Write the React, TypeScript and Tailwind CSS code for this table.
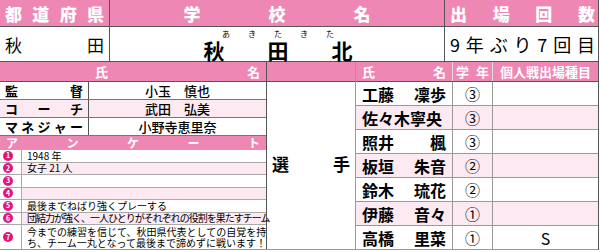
const font = "font-['Noto_Sans_CJK_JP','Noto_Sans',sans-serif]";

const staff = [
    { role: ["監", "督"], name: "小玉　慎也" },
    { role: ["コ", "ー", "チ"], name: "武田　弘美" },
    { role: ["マ", "ネ", "ジ", "ャ", "ー"], name: "小野寺恵里奈" },
];

const survey = [
    "1948 年",
    "女子 21 人",
    "",
    "",
    "最後までねばり強くプレーする",
    "団結力が強く、一人ひとりがそれぞれの役割を果たすチーム",
];

const players = [
    { name: ["工藤", "凜歩"], grade: "③", event: "" },
    { name: ["佐々木寧央"], grade: "③", event: "" },
    { name: ["照井", "楓"], grade: "③", event: "" },
    { name: ["板垣", "朱音"], grade: "②", event: "" },
    { name: ["鈴木", "琉花"], grade: "②", event: "" },
    { name: ["伊藤", "音々"], grade: "①", event: "" },
    { name: ["高橋", "里菜"], grade: "①", event: "S" },
];

function Spread({ chars, className }: { chars: string[]; className?: string }) {
    return (
        <div className={`flex justify-between ${className ?? ""}`}>
            {chars.map((c, i) => (
                <span key={i}>{c}</span>
            ))}
        </div>
    );
}

function Badge({ n }: { n: number }) {
    return (
        <div className="w-[22px] shrink-0 flex items-center pl-[3px] border-r border-[#aaa] bg-white">
            <span className="w-[10px] h-[10px] rounded-full bg-[#e5137e] text-white text-[7px] font-bold leading-none flex items-center justify-center">
                {n}
            </span>
        </div>
    );
}

export default function App() {
    return (
        <div className={`w-[600px] h-[252px] bg-white text-black ${font}`}>
            <div className="w-[599px] border-r border-[#555]">
                {/* Header row */}
                <div className="flex h-[27px] bg-[#ee87b4] text-white font-extrabold text-[17px] leading-none border-b border-[#555]">
                    <Spread chars={["都", "道", "府", "県"]} className="w-[110px] px-[5px] items-center border-r border-[#555]" />
                    <div className="w-[335px] flex items-center justify-center gap-[68px] border-r border-[#555]">
                        <span>学</span>
                        <span>校</span>
                        <span>名</span>
                    </div>
                    <Spread chars={["出", "場", "回", "数"]} className="flex-1 pl-[5px] pr-[3px] items-center" />
                </div>

                {/* School row */}
                <div className="flex h-[35px] border-b border-[#555] leading-none">
                    <Spread chars={["秋", "田"]} className="w-[110px] px-[5px] items-center text-[17px] border-r border-[#555]" />
                    <div className="w-[335px] flex flex-col items-center justify-start pt-[2px] border-r border-[#555]">
                        <div className="flex gap-[18px] text-[8px] leading-[9px] pl-[2px]">
                            <span>あ</span>
                            <span>き</span>
                            <span>た</span>
                            <span>き</span>
                            <span>た</span>
                        </div>
                        <div className="flex gap-[43px] text-[21px] leading-[21px] font-bold mt-[2px] pl-[2px]">
                            <span>秋</span>
                            <span>田</span>
                            <span>北</span>
                        </div>
                    </div>
                    <Spread chars={["9", "年", "ぶ", "り", "7", "回", "目"]} className="flex-1 pl-[5px] pr-[3px] items-center text-[18px]" />
                </div>

                {/* Lower section */}
                <div className="flex h-[188px] border-b border-[#999]">
                    {/* Left: staff & survey */}
                    <div className="w-[267px] flex flex-col border-r border-[#555]">
                        <div className="flex h-[20px] bg-[#ee87b4] text-white font-bold text-[13px] leading-none border-b border-[#555]">
                            <div className="w-[89px]" />
                            <Spread chars={["氏", "名"]} className="flex-1 px-[6px] items-center" />
                        </div>
                        {staff.map((s, i) => (
                            <div
                                key={i}
                                className={`flex h-[18px] text-[13px] leading-none border-b border-[#777] ${i % 2 === 1 ? "bg-[#fde9f2]" : ""}`}
                            >
                                <Spread chars={s.role} className="w-[89px] px-[5px] items-center font-bold border-r border-[#555]" />
                                <div className="flex-1 flex items-center justify-center font-medium">{s.name}</div>
                            </div>
                        ))}
                        <Spread
                            chars={["ア", "ン", "ケ", "ー", "ト"]}
                            className="h-[14px] bg-[#ee87b4] text-white font-bold text-[12px] leading-none px-[6px] items-center"
                        />
                        {survey.map((t, i) => (
                            <div
                                key={i}
                                className={`flex h-[12.5px] border-b border-[#aaa] ${i % 2 === 1 ? "bg-[#fde9f2]" : ""}`}
                            >
                                <Badge n={i + 1} />
                                <div
                                    className={`flex-1 flex items-center pl-[5px] text-[10px] leading-none whitespace-nowrap ${i === 5 ? "tracking-[-1px]" : ""}`}
                                >
                                    {t}
                                </div>
                            </div>
                        ))}
                        <div className="flex flex-1">
                            <Badge n={7} />
                            <div className="flex-1 flex flex-col justify-center pl-[5px] text-[10px] leading-[11px] whitespace-nowrap">
                                <span>今までの練習を信じて、秋田県代表としての自覚を持</span>
                                <span>ち、チーム一丸となって最後まで諦めずに戦います！</span>
                            </div>
                        </div>
                    </div>

                    {/* Middle: 選手 */}
                    <div className="w-[89px] flex flex-col border-r border-[#999]">
                        <div className="h-[20px] bg-[#ee87b4] border-b border-[#555]" />
                        <Spread chars={["選", "手"]} className="flex-1 items-center px-[5px] pb-[4px] text-[17px] font-bold leading-none" />
                    </div>

                    {/* Right: players */}
                    <div className="flex-1 flex flex-col">
                        <div className="flex h-[20px] bg-[#ee87b4] text-white font-bold text-[13px] leading-none border-b border-[#555]">
                            <Spread chars={["氏", "名"]} className="w-[97px] px-[6px] items-center border-r border-[#ddd]" />
                            <Spread chars={["学", "年"]} className="w-[40px] px-[3px] items-center border-r border-[#ddd]" />
                            <div className="flex-1 flex items-center justify-center">個人戦出場種目</div>
                        </div>
                        {players.map((p, i) => (
                            <div
                                key={i}
                                className={`flex flex-1 border-b border-[#999] last:border-b-0 leading-none ${i % 2 === 1 ? "bg-[#fde9f2]" : ""}`}
                            >
                                <Spread chars={p.name} className="w-[97px] px-[6px] items-center text-[16px] font-bold border-r border-[#999]" />
                                <div className="w-[40px] flex items-center justify-center text-[15px] border-r border-[#999]">{p.grade}</div>
                                <div className="flex-1 flex items-center justify-center text-[16px]">{p.event}</div>
                            </div>
                        ))}
                    </div>
                </div>
            </div>
        </div>
    );
}
